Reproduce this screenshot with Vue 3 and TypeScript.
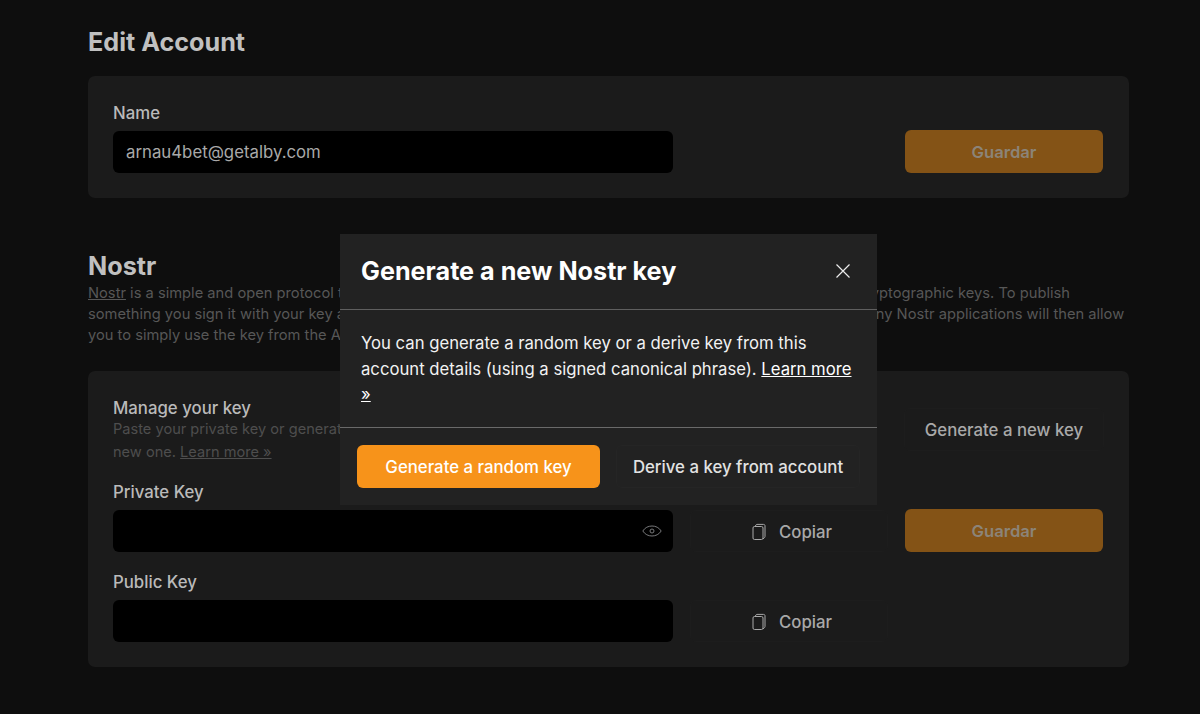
<script setup lang="ts">
const title = 'Generate a new Nostr key'
</script>

<template>
  <div class="page">
    <main class="content">
      <h2 class="heading">Edit Account</h2>
      <section class="card account">
        <div class="grow">
          <label class="label">Name</label>
          <div class="input"><span>arnau4bet@getalby.com</span></div>
        </div>
        <button class="btn primary">Guardar</button>
      </section>

      <h2 class="heading nostr">Nostr</h2>
      <p class="desc">
        <a class="link">Nostr</a> is a simple and open protocol that aims to create censorship-resistant social networks. Nostr works with cryptographic keys. To publish something you sign it with your key and send it to multiple relays. You can use Alby to manage your Nostr key. Many Nostr applications will then allow you to simply use the key from the Alby extension.
      </p>

      <section class="card keys">
        <div class="manage">
          <div class="manage-text">
            <div class="label">Manage your key</div>
            <p class="sub">Paste your private key or generate a random one to get started, or derive a new one. <a class="link">Learn more »</a></p>
          </div>
          <button class="btn ghost gen">Generate a new key</button>
        </div>

        <label class="label pk">Private Key</label>
        <div class="row first">
          <div class="input">
            <svg class="eye" viewBox="0 0 20 12" width="20" height="12" fill="none" stroke="#77787a" stroke-width="1">
              <path d="M.8 6C3 2.600 6.200 1 10 1s7 1.600 9.200 5C17 9.400 13.800 11 10 11S3 9.400.8 6Z" />
              <circle cx="10" cy="6" r="2" />
            </svg>
          </div>
          <button class="btn ghost copy">
            <svg viewBox="0 0 14 18" width="14" height="18" fill="none" stroke="#a9a9a9" stroke-width="1">
              <path d="M3 3.500 4 2c.2-.4.500-.6 1-.6h6.500c1 0 1.500.5 1.500 1.500v10.500c0 .6-.2 1-.6 1.300L11 16" />
              <rect x="1" y="3.500" width="10" height="13" rx="1.500" />
            </svg>
            <span>Copiar</span>
          </button>
          <button class="btn primary">Guardar</button>
        </div>

        <label class="label pk second">Public Key</label>
        <div class="row">
          <div class="input"></div>
          <button class="btn ghost copy">
            <svg viewBox="0 0 14 18" width="14" height="18" fill="none" stroke="#a9a9a9" stroke-width="1">
              <path d="M3 3.500 4 2c.2-.4.500-.6 1-.6h6.500c1 0 1.500.5 1.500 1.500v10.500c0 .6-.2 1-.6 1.300L11 16" />
              <rect x="1" y="3.500" width="10" height="13" rx="1.500" />
            </svg>
            <span>Copiar</span>
          </button>
          <div class="spacer"></div>
        </div>
      </section>
    </main>

    <div class="modal" role="dialog">
      <header class="modal-head">
        <h3>{{ title }}</h3>
        <svg viewBox="0 0 16 16" width="16" height="16" fill="none" stroke="#ececec" stroke-width="1.200">
          <path d="M1.500 1.500 14.500 14.500M14.500 1.500 1.500 14.500" />
        </svg>
      </header>
      <div class="modal-body">
        You can generate a random key or a derive key from this account details (using a signed canonical phrase). <a class="modal-link">Learn more »</a>
      </div>
      <footer class="modal-foot">
        <button class="btn solid">Generate a random key</button>
        <button class="btn outline">Derive a key from account</button>
      </footer>
    </div>
  </div>
</template>

<style>
html, body { margin: 0; background: #0e0e0e; }
</style>

<style scoped>
.page {
  position: relative;
  width: 1200px;
  height: 714px;
  overflow: hidden;
  background: #0e0e0e;
  font-family: Inter, "Liberation Sans", sans-serif;
}
.content { width: 1041px; margin-left: 88px; padding-top: 27px; }
.heading { margin: 0; font-size: 25.200px; line-height: 30px; font-weight: 700; color: #c0c0c0; }
.nostr { margin-top: 53px; }
.card { background: #1b1b1b; border-radius: 7px; box-sizing: border-box; }
.account {
  margin-top: 19px;
  height: 122px;
  padding: 26px 25px 0 25px;
  display: flex;
  align-items: flex-start;
}
.grow { width: 560px; margin-right: 232px; }
.label { display: block; font-size: 16.800px; line-height: 22px; font-weight: 500; color: #bababa; }
.input {
  position: relative;
  margin-top: 7px;
  width: 560px;
  height: 42px;
  box-sizing: border-box;
  flex: none;
  background: #000;
  border-radius: 6px;
  padding: 0 13px;
  display: flex;
  align-items: center;
  font-size: 16.800px;
  color: #a9a9a9;
}
.btn {
  box-sizing: border-box;
  font-family: inherit;
  font-size: 16.800px;
  font-weight: 500;
  display: flex;
  align-items: center;
  justify-content: center;
  border-radius: 6px;
  padding: 0;
  border: 1px solid transparent;
}
.primary {
  flex: none;
  width: 198px;
  height: 43px;
  margin-top: 28px;
  background: #845316;
  color: #8c8478;
  font-size: 16.600px;
  font-weight: 600;
}
.row .primary { margin-top: 0; }
.desc {
  margin: 2px 0 0;
  width: 1040px;
  font-size: 14.700px;
  line-height: 21px;
  color: #575757;
}
.link { color: inherit; text-decoration: underline; }
.keys { margin-top: 25px; height: 296px; padding: 26px 25px 0; }
.manage { display: flex; align-items: flex-start; justify-content: space-between; }
.manage-text { width: 530px; }
.sub { margin: -1px 0 0; font-size: 14.600px; line-height: 23px; color: #4e4e4e; }
.ghost { background: #1b1b1b; border-color: #1d1d1d; color: #a9a9a9; }
.gen { width: 200px; height: 43px; margin-top: 11px; }
.pk { margin-top: 17px; }
.second { margin-top: 19px; }
.row { display: flex; align-items: center; margin-top: 7px; }
.first { margin-top: 6px; }
.row .input { margin-top: 0; }
.copy {
  width: 198px;
  height: 42px;
  margin-left: 17px;
  margin-right: 17px;
  padding: 2px 0 0 6px;
  gap: 13px;
  flex: none;
}
.spacer { width: 198px; flex: none; }
.eye { position: absolute; right: 11px; top: 15px; }
.modal {
  position: absolute;
  left: 340px;
  top: 234px;
  width: 537px;
  height: 271px;
  background: #222222;
  display: flex;
  flex-direction: column;
}
.modal-head {
  height: 76px;
  flex: none;
  box-sizing: border-box;
  padding: 0 26px 1px 21px;
  display: flex;
  align-items: center;
  justify-content: space-between;
  border-bottom: 1px solid #5f5f5f;
}
.modal-head h3 { margin: 0; font-size: 25.200px; font-weight: 700; color: #fff; }
.modal-body {
  height: 118px;
  flex: none;
  box-sizing: border-box;
  padding: 21px 21px 0;
  border-bottom: 1px solid #6a6a6a;
  font-size: 16.700px;
  line-height: 25.500px;
  color: #f2f2f2;
}
.modal-link { text-decoration: underline; color: #fff; }
.modal-foot { display: flex; padding: 17px 16px 0 17px; gap: 16px; }
.solid {
  width: 243px;
  height: 43px;
  background: #f7931a;
  color: #fff;
}
.outline {
  width: 244px;
  height: 43px;
  background: #222222;
  border-color: #252525;
  color: #e2e2e2;
}
</style>
